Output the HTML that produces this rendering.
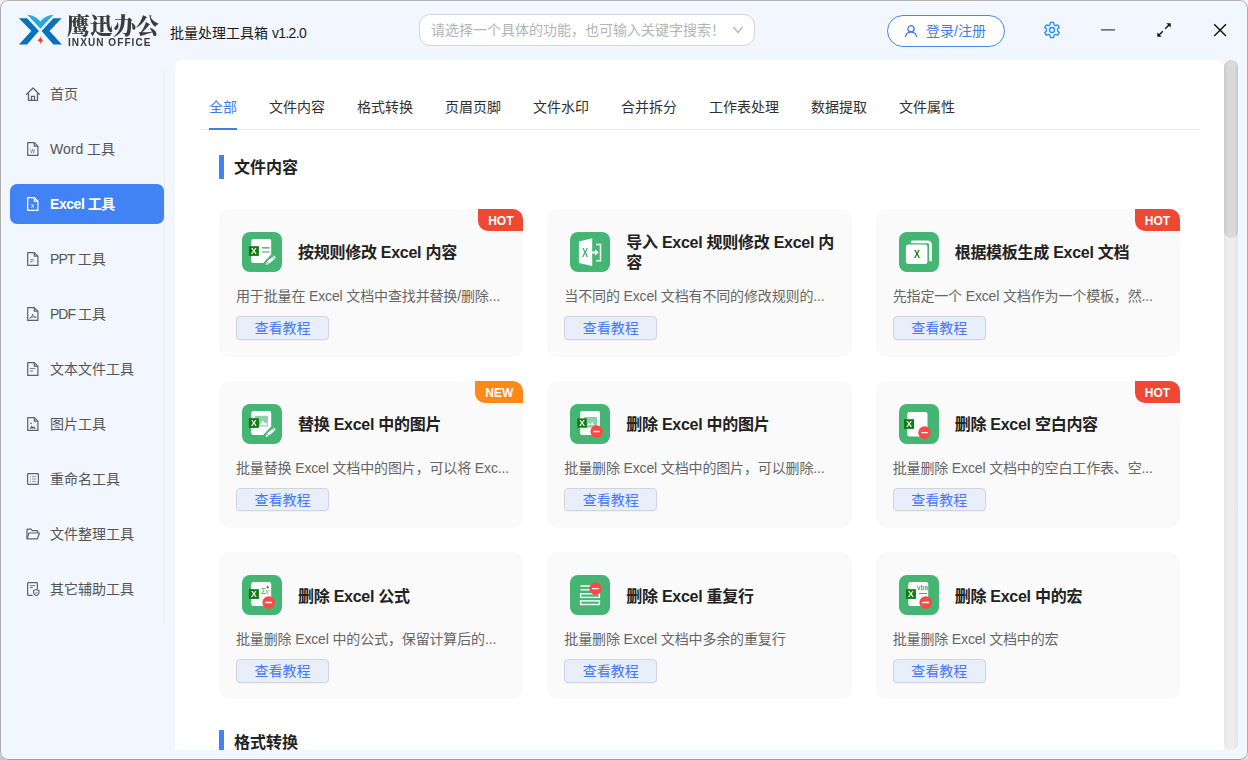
<!DOCTYPE html>
<html lang="zh-CN">
<head>
<meta charset="utf-8">
<title>批量处理工具箱</title>
<style>
*{box-sizing:border-box;margin:0;padding:0}
html,body{width:1248px;height:760px;overflow:hidden;background:#dcdcdc}
body{font-family:"Liberation Sans","Noto Sans CJK SC",sans-serif;color:#333;position:relative}
.win{position:absolute;left:0;top:0;width:1248px;height:760px;background:#f2f6fe;border-radius:8px;overflow:hidden}
.frame{position:absolute;left:0;top:0;width:1248px;height:760px;border:1px solid #adadad;border-color:#b2b2b2 #ababab #9d9d9d #adadad;border-radius:8px;pointer-events:none;z-index:5;box-shadow:inset 0 0 0 1px rgba(255,255,255,.45)}
.cn{position:absolute;width:10px;height:10px}
.abs{position:absolute;z-index:2}
/* header */
.brand-cn{will-change:transform;position:absolute;left:67px;top:11px;font-family:"Noto Serif CJK SC","Noto Sans CJK SC",serif;font-size:23px;font-weight:900;color:#3c3c3c;letter-spacing:0px;line-height:28px;white-space:nowrap}
.brand-en{will-change:transform;position:absolute;left:68px;top:36px;font-size:10px;font-weight:bold;color:#3a3a3a;letter-spacing:1.08px;line-height:14px;white-space:nowrap}
.apptitle{position:absolute;left:170px;top:23px;font-size:14px;line-height:20px;color:#1a1a1a;white-space:nowrap}
.search{position:absolute;left:419px;top:14px;width:336px;height:32px;border:1px solid #d4d4d4;border-radius:11px;background:#fff}
.search span{position:absolute;left:11px;top:5px;font-size:14px;line-height:20px;color:#b4b4b4;white-space:nowrap}
.login{position:absolute;left:887px;top:15px;width:118px;height:32px;border:1px solid #4a84f2;border-radius:16px;background:#fff}
.login span{position:absolute;left:38px;top:5px;font-size:14px;line-height:20px;color:#3f7cf0;white-space:nowrap}
/* sidebar */
.side-line{position:absolute;left:164px;top:70px;width:1px;height:554px;background:#eaebef}
.nav{position:absolute;left:10px;width:154px;height:40px;border-radius:7px}
.nav span{position:absolute;left:40px;top:9px;font-size:14px;line-height:22px;color:#555;white-space:nowrap}
.nav svg{position:absolute;left:16px;top:13px;will-change:transform}
.nav.on{background:#4183f5}
.nav.on span{color:#fff;font-weight:bold;letter-spacing:-.45px}
/* panel */
.panel{position:absolute;left:175px;top:60px;width:1049px;height:690px;background:#fff;border-radius:8px 8px 0 0;overflow:hidden}
.track{position:absolute;left:1224px;top:60px;width:14px;height:690px;background:linear-gradient(90deg,#e4e4e4,#ededed 30%,#ededed 70%,#e2e2e2);border-radius:7px}
.thumb{position:absolute;left:1224px;top:60px;width:14px;height:178px;background:linear-gradient(90deg,#c9c9c9,#d9d9d9 25%,#dadada 75%,#c8c8c8);border-radius:7px}
.tabs{position:absolute;left:24px;top:69px;width:1001px;height:1px;background:#ebebeb}
.tab{position:absolute;top:36px;font-size:14px;line-height:22px;color:#303030;white-space:nowrap}
.tab.on{color:#3f7cf0}
.tabbar{position:absolute;left:34px;top:68px;width:28px;height:2px;background:#3f7cf0}
.sec{position:absolute;left:44px;width:5px;height:24px;background:#4183f5}
.sect{position:absolute;left:59px;font-size:16px;font-weight:bold;line-height:24px;color:#222;white-space:nowrap}
.card{position:absolute;width:304.33px;height:147.33px;background:#fafafa;border-radius:10px;overflow:hidden}
.ico{position:absolute;left:23px;top:23px;width:40px;height:40px;border-radius:8px;background:#45b573}
.ico svg{display:block;will-change:transform}
.ct{position:absolute;left:79px;top:24.5px;width:215px;height:40px;display:flex;align-items:center;font-size:16px;font-weight:bold;line-height:20px;color:#222;letter-spacing:-.27px}
.r1 .ct{top:24px}
.cd{position:absolute;left:17px;top:76px;font-size:14px;line-height:22px;color:#666;white-space:nowrap;letter-spacing:-.14px}
.btn{position:absolute;left:17px;top:107px;width:93px;height:23.5px;border:1px solid #d2d4dc;border-radius:4px;background:#e9eefb;text-align:center;font-size:14px;line-height:22px;color:#4877f3;box-shadow:0 1px 1px rgba(0,0,0,.04)}
.badge{position:absolute;right:0;top:0;width:45px;height:22px;border-radius:0 0 0 10px;color:#fff;font-size:12px;font-weight:bold;line-height:24px;text-align:center}
.hot{background:#f14835}
.new{background:#ff8818;width:48px}
</style>
</head>
<body>
<div class="cn" style="left:0;top:0;background:#f0f0f0"></div><div class="cn" style="right:0;top:0;background:#f3f3f3"></div><div class="cn" style="left:0;bottom:0;background:#c6c6c6"></div><div class="cn" style="right:0;bottom:0;background:#dedede"></div>
<div class="win">
  <!-- header -->
  <svg class="abs" style="left:14px;top:8px" width="56" height="44" viewBox="14 8 56 44">
    <path d="M18.900 18.200H27.100L38.900 31 27.100 44.500H18.900L31.400 31z" fill="#0871be"/>
    <path d="M61.600 18.200H53.400L41.600 31 53.400 44.500H61.900L49.500 31z" fill="#0871be"/>
    <path d="M27 14.700C31.500 14.800 37 17 40.400 21.400 43.800 17 49.300 14.800 53.800 14.700Q52.300 15.800 50.800 17.500L40.400 28.700 30 17.500Q28.500 15.800 27 14.700z" fill="#29a9e0"/>
    <path d="M40.400 36c.4 2.500 1 3.600 3.400 4.200-2.400.6-3 1.700-3.400 4.200-.4-2.500-1-3.600-3.400-4.200 2.400-.6 3-1.700 3.400-4.200z" fill="#f33"/>
  </svg>
  <svg class="abs" style="left:731px;top:24px" width="14" height="12" viewBox="0 0 14 12"><path d="M2.500 2.800L7 8.600 11.500 2.800" fill="none" stroke="#a8a8a8" stroke-width="1.100"/></svg>
  <svg class="abs" style="left:1043px;top:21px" width="18" height="18" viewBox="0 0 18 18"><path d="M10.97 3.76L10.61 1.47L7.39 1.47L7.03 3.76L5.45 4.67L3.28 3.84L1.68 6.62L3.47 8.09L3.47 9.91L1.68 11.38L3.28 14.16L5.45 13.33L7.03 14.24L7.39 16.53L10.61 16.53L10.97 14.24L12.55 13.33L14.72 14.16L16.32 11.38L14.53 9.91L14.53 8.09L16.32 6.62L14.72 3.84L12.55 4.67Z" fill="#e8f3ff" stroke="#2b8af8" stroke-width="1.300" stroke-linejoin="round"/><circle cx="9" cy="9" r="2.500" fill="#f2f6fe" stroke="#2b8af8" stroke-width="1.300"/></svg>
  <svg class="abs" style="left:1100px;top:22px" width="16" height="16" viewBox="0 0 16 16"><path d="M1 7.900h14" stroke="#444" stroke-width="1.400"/></svg>
  <svg class="abs" style="left:1156px;top:22px" width="16" height="16" viewBox="0 0 16 16"><path d="M3 13L6.800 9.200M9.200 6.800L13 3" stroke="#111" stroke-width="1.400"/><path d="M1.300 14.700v-4.300l4.300 4.300zM14.700 1.300v4.300l-4.300-4.300z" fill="#111"/></svg>
  <svg class="abs" style="left:1212px;top:22px" width="16" height="16" viewBox="0 0 16 16"><path d="M2.200 2.200l11.800 11.800M14 2.200L2.200 14" stroke="#111" stroke-width="1.400"/></svg>
  <div class="brand-cn">鹰迅办公</div>
  <div class="brand-en">INXUN OFFICE</div>
  <div class="apptitle">批量处理工具箱 <i style="font-style:normal;letter-spacing:-.65px">v1.2.0</i></div>
  <div class="search"><span>请选择一个具体的功能，也可输入关键字搜索！</span></div>
  <div class="login"><svg class="abs" style="left:16px;top:8px" width="14" height="15" viewBox="0 0 14 15"><circle cx="7" cy="4.800" r="3.100" fill="none" stroke="#3f7cf0" stroke-width="1.300"/><path d="M1.500 12.700c.6-2.700 2.700-4.500 5.500-4.500s4.900 1.800 5.500 4.500" fill="none" stroke="#3f7cf0" stroke-width="1.300" stroke-linecap="round"/></svg><span>登录/注册</span></div>
  <!-- sidebar -->
  <div class="side-line"></div>
  <!-- nav -->
  <div class="nav" style="top:74px"><svg width="14" height="14" viewBox="0 0 14 14"><path d="M.7 7.2L7 1l6.3 6.200" fill="none" stroke="#5c616b" stroke-width="1.3" stroke-linecap="round" stroke-linejoin="round"/><path d="M2.5 6.200v7.100h9V6.200M5.500 13.300V9.300h3v4" fill="none" stroke="#5c616b" stroke-width="1.3" stroke-linejoin="round"/></svg><span>首页</span></div>
  <div class="nav" style="top:129px"><svg width="14" height="14" viewBox="0 0 14 14"><path d="M1.7 .6h6.6l3.6 3.6v9.2H1.7z" fill="none" stroke="#5c616b" stroke-width="1.2" stroke-linejoin="round"/><path d="M8.300 .6v3.600h3.600" fill="none" stroke="#5c616b" stroke-width="1.2" stroke-linejoin="round"/><text x="6.5" y="11.2" font-family="Liberation Sans,sans-serif" font-size="6.5" font-weight="normal" text-anchor="middle" fill="#5c616b">w</text></svg><span>Word 工具</span></div>
  <div class="nav on" style="top:184px"><svg width="14" height="14" viewBox="0 0 14 14"><path d="M1.7 .6h6.6l3.6 3.6v9.2H1.7z" fill="none" stroke="#ffffff" stroke-width="1.2" stroke-linejoin="round"/><path d="M8.300 .6v3.600h3.600" fill="none" stroke="#ffffff" stroke-width="1.2" stroke-linejoin="round"/><text x="6.5" y="11.2" font-family="Liberation Sans,sans-serif" font-size="6.5" font-weight="normal" text-anchor="middle" fill="#ffffff">x</text></svg><span>Excel 工具</span></div>
  <div class="nav" style="top:239px"><svg width="14" height="14" viewBox="0 0 14 14"><path d="M1.7 .6h6.6l3.6 3.6v9.2H1.7z" fill="none" stroke="#5c616b" stroke-width="1.2" stroke-linejoin="round"/><path d="M8.300 .6v3.600h3.600" fill="none" stroke="#5c616b" stroke-width="1.2" stroke-linejoin="round"/><text x="6" y="11.2" font-family="Liberation Sans,sans-serif" font-size="5.5" font-weight="normal" text-anchor="middle" fill="#5c616b">P</text></svg><span><i style="font-style:normal;letter-spacing:-.8px">PPT </i>工具</span></div>
  <div class="nav" style="top:294px"><svg width="14" height="14" viewBox="0 0 14 14"><path d="M1.7 .6h6.6l3.6 3.6v9.2H1.7z" fill="none" stroke="#5c616b" stroke-width="1.2" stroke-linejoin="round"/><path d="M8.300 .6v3.600h3.600" fill="none" stroke="#5c616b" stroke-width="1.2" stroke-linejoin="round"/><path d="M4 11.200c1.200-.6 2.300-2.200 2.600-4.200c.3 2 1.600 3.200 3.400 3.600M4.200 10.600c2-.8 4-1 5.600-.4" fill="none" stroke="#5c616b" stroke-width=".9" stroke-linecap="round"/></svg><span><i style="font-style:normal;letter-spacing:-1px">PDF </i>工具</span></div>
  <div class="nav" style="top:349px"><svg width="14" height="14" viewBox="0 0 14 14"><path d="M1.7 .6h6.6l3.6 3.6v9.2H1.7z" fill="none" stroke="#5c616b" stroke-width="1.2" stroke-linejoin="round"/><path d="M8.300 .6v3.600h3.600" fill="none" stroke="#5c616b" stroke-width="1.2" stroke-linejoin="round"/><path d="M3.800 6.600h5.400M3.800 9h3" fill="none" stroke="#5c616b" stroke-width="1" opacity=".85"/></svg><span>文本文件工具</span></div>
  <div class="nav" style="top:404px"><svg width="14" height="14" viewBox="0 0 14 14"><path d="M1.7 .6h6.6l3.6 3.6v9.2H1.7z" fill="none" stroke="#5c616b" stroke-width="1.2" stroke-linejoin="round"/><path d="M8.300 .6v3.600h3.600" fill="none" stroke="#5c616b" stroke-width="1.2" stroke-linejoin="round"/><path d="M3.500 11.400l2.200-3 1.500 1.800 1-1 1.600 2.200z" fill="#5c616b"/><circle cx="5" cy="6.400" r=".8" fill="#5c616b"/></svg><span>图片工具</span></div>
  <div class="nav" style="top:459px"><svg width="14" height="14" viewBox="0 0 14 14"><rect x="1.600" y="1.600" width="10.800" height="10.800" rx=".8" fill="none" stroke="#5c616b" stroke-width="1.200"/><path d="M4 4.600h1M6 4.600h4.200M4 7h1M6 7h4.200M4 9.400h1M6 9.400h4.200" fill="none" stroke="#5c616b" stroke-width=".8" opacity=".8"/></svg><span>重命名工具</span></div>
  <div class="nav" style="top:514px"><svg width="14" height="14" viewBox="0 0 14 14"><path d="M1 11.800V2.800c0-.4.300-.7.700-.7h3.300l1.300 1.500h4.700c.4 0 .7.300.7.700v1.500" fill="none" stroke="#5c616b" stroke-width="1.200" stroke-linejoin="round"/><path d="M1 11.800l2-5.800h10.400l-2 5.800z" fill="none" stroke="#5c616b" stroke-width="1.200" stroke-linejoin="round"/></svg><span>文件整理工具</span></div>
  <div class="nav" style="top:569px"><svg width="14" height="14" viewBox="0 0 14 14"><path d="M6.500 13.300H2.300c-.4 0-.7-.3-.7-.7V1.400c0-.4.300-.7.700-.7h8.400c.4 0 .7.300.7.700v5.500" fill="none" stroke="#5c616b" stroke-width="1.200" stroke-linejoin="round"/><path d="M3.800 3.700h5.400M3.800 5.700h3" fill="none" stroke="#5c616b" stroke-width=".9"/><path d="M10.300 7.600l2.700 1v2c0 1.500-1.100 2.500-2.700 3.100c-1.600-.6-2.700-1.600-2.700-3.100v-2z" fill="#f2f6fe" stroke="#5c616b" stroke-width="1.100" stroke-linejoin="round"/><path d="M9.100 10.600l.9.900 1.600-1.700" fill="none" stroke="#5c616b" stroke-width=".9"/></svg><span>其它辅助工具</span></div>
  <!-- panel -->
  <div class="track"></div><div class="thumb"></div>
  <div class="panel" id="panel">
    <div class="tabs"></div>
    <div class="tabbar"></div>
    <div class="tab on" style="left:34px">全部</div>
    <div class="tab" style="left:94px">文件内容</div>
    <div class="tab" style="left:182px">格式转换</div>
    <div class="tab" style="left:270px">页眉页脚</div>
    <div class="tab" style="left:358px">文件水印</div>
    <div class="tab" style="left:446px">合并拆分</div>
    <div class="tab" style="left:534px">工作表处理</div>
    <div class="tab" style="left:636px">数据提取</div>
    <div class="tab" style="left:724px">文件属性</div>
    <div class="sec" style="top:95px"></div><div class="sect" style="top:96px">文件内容</div>
    <div class="card r1" style="left:44px;top:149.33px"><div class="ico"><svg width="40" height="40" viewBox="0 0 40 40"><path d="M11.300 6.900h15.900a2 2 0 0 1 2 2v13.600L21.200 31h-9.900a2 2 0 0 1-2-2V8.900a2 2 0 0 1 2-2z" fill="#fff"/><path d="M20 15.800h7.700M20 20h7.700" stroke="#3aa55e" stroke-width="1.200" fill="none"/><rect x="6.9" y="14.2" width="10" height="9.7" fill="#107c10"/><text x="11.9" y="22.3" font-family="Liberation Sans,sans-serif" font-size="8.500" font-weight="bold" fill="#fff" text-anchor="middle">X</text><g transform="rotate(-41 28.200 28.700)"><path d="M22.200 28.700l2.400-1.500v3z" fill="#fff"/><rect x="25.200" y="27.200" width="7" height="3" fill="#fff"/><rect x="32.800" y="27.200" width="1.600" height="3" rx=".4" fill="#fff"/></g></svg></div><div class="ct">按规则修改 Excel 内容</div><div class="cd">用于批量在 Excel 文档中查找并替换/删除...</div><div class="btn">查看教程</div><div class="badge hot">HOT</div></div>
    <div class="card r1" style="left:372.33px;top:149.33px"><div class="ico"><svg width="40" height="40" viewBox="0 0 40 40"><path d="M8.900 9.500L22.200 6.200V34.100L8.900 31z" fill="#fff"/><text transform="translate(15.1 24.800) scale(.72 1)" font-family="Liberation Sans,sans-serif" font-size="13" font-weight="bold" fill="#45b573" text-anchor="middle">X</text><path d="M22.200 20.500h4" stroke="#fff" stroke-width="2.100" fill="none"/><path d="M25.200 17.300l3.400 3.200-3.400 3.200z" fill="#fff"/><path d="M26.200 12.400h4.300v16.400h-4.300" stroke="#fff" stroke-width="1.500" fill="none"/></svg></div><div class="ct">导入 Excel 规则修改 Excel 内容</div><div class="cd">当不同的 Excel 文档有不同的修改规则的...</div><div class="btn">查看教程</div></div>
    <div class="card r1" style="left:700.67px;top:149.33px"><div class="ico"><svg width="40" height="40" viewBox="0 0 40 40"><path d="M13.200 9.800h15.400a3 3 0 0 1 3 3v15.200" stroke="#fff" stroke-width="2.800" stroke-linecap="round" fill="none"/><rect x="6.900" y="12.500" width="21.500" height="19.600" rx="2.800" fill="#fff"/><text transform="translate(18 26.200) scale(.86 1)" font-family="Liberation Sans,sans-serif" font-size="10.500" font-weight="bold" fill="#107c10" text-anchor="middle">X</text></svg></div><div class="ct">根据模板生成 Excel 文档</div><div class="cd">先指定一个 Excel 文档作为一个模板，然...</div><div class="btn">查看教程</div><div class="badge hot">HOT</div></div>
    <div class="card" style="left:44px;top:320.67px"><div class="ico"><svg width="40" height="40" viewBox="0 0 40 40"><path d="M11.300 6.900h15.900a2 2 0 0 1 2 2v13.600L21.200 31h-9.900a2 2 0 0 1-2-2V8.900a2 2 0 0 1 2-2z" fill="#fff"/><rect x="12.900" y="11.800" width="13" height="10.700" fill="#8ad3aa"/><path d="M17.500 21.200l3.300-4.600 2 2.600 1-1 1.900 3z" fill="#fff"/><rect x="6.9" y="14.2" width="10" height="9.7" fill="#107c10"/><text x="11.9" y="22.3" font-family="Liberation Sans,sans-serif" font-size="8.500" font-weight="bold" fill="#fff" text-anchor="middle">X</text><g transform="rotate(-41 28.200 28.700)"><path d="M22.200 28.700l2.400-1.500v3z" fill="#fff"/><rect x="25.200" y="27.200" width="7" height="3" fill="#fff"/><rect x="32.800" y="27.200" width="1.600" height="3" rx=".4" fill="#fff"/></g></svg></div><div class="ct">替换 Excel 中的图片</div><div class="cd">批量替换 Excel 文档中的图片，可以将 Exc...</div><div class="btn">查看教程</div><div class="badge new">NEW</div></div>
    <div class="card" style="left:372.33px;top:320.67px"><div class="ico"><svg width="40" height="40" viewBox="0 0 40 40"><rect x="10.1" y="7.1" width="19.9" height="23.9" rx="2.200" fill="#fff"/><rect x="14" y="13" width="13" height="10.700" fill="#8ad3aa"/><path d="M17.500 21l1.200-2.300 1.800 2 1.700-3.200 1.600 3.500z" fill="#fff"/><rect x="7.2" y="14.4" width="9.6" height="9.299999999999999" fill="#107c10"/><text x="12.0" y="22.1" font-family="Liberation Sans,sans-serif" font-size="8.500" font-weight="bold" fill="#fff" text-anchor="middle">X</text><circle cx="26.7" cy="27.5" r="6.300" fill="#ff4848"/><rect x="23.2" y="26.85" width="6.800" height="1.300" rx=".5" fill="#fff"/></svg></div><div class="ct">删除 Excel 中的图片</div><div class="cd">批量删除 Excel 文档中的图片，可以删除...</div><div class="btn">查看教程</div></div>
    <div class="card" style="left:700.67px;top:320.67px"><div class="ico"><svg width="40" height="40" viewBox="0 0 40 40"><rect x="8.3" y="8.1" width="20.2" height="24.3" rx="2.200" fill="#fff"/><rect x="5" y="15.2" width="10" height="9.7" fill="#107c10"/><text x="10.0" y="23.3" font-family="Liberation Sans,sans-serif" font-size="8.500" font-weight="bold" fill="#fff" text-anchor="middle">X</text><circle cx="25.5" cy="28.6" r="6.300" fill="#ff4848"/><rect x="22.0" y="27.95" width="6.800" height="1.300" rx=".5" fill="#fff"/></svg></div><div class="ct">删除 Excel 空白内容</div><div class="cd">批量删除 Excel 文档中的空白工作表、空...</div><div class="btn">查看教程</div><div class="badge hot">HOT</div></div>
    <div class="card" style="left:44px;top:492px"><div class="ico"><svg width="40" height="40" viewBox="0 0 40 40"><rect x="9.3" y="6.9" width="19.9" height="24.1" rx="2.200" fill="#fff"/><text x="19" y="18.700" font-family="Liberation Sans,sans-serif" font-size="8.500" fill="#45b573">Σ</text><text x="23.500" y="18.700" font-family="Liberation Sans,sans-serif" font-size="7" font-style="italic" fill="#45b573">x</text><path d="M25.700 10.800v2.800M24.300 12.200h2.800" stroke="#107c10" stroke-width=".8"/><rect x="6.9" y="14.2" width="10" height="9.7" fill="#107c10"/><text x="11.9" y="22.3" font-family="Liberation Sans,sans-serif" font-size="8.500" font-weight="bold" fill="#fff" text-anchor="middle">X</text><circle cx="26.7" cy="27.5" r="6.300" fill="#ff4848"/><rect x="23.2" y="26.85" width="6.800" height="1.300" rx=".5" fill="#fff"/></svg></div><div class="ct">删除 Excel 公式</div><div class="cd">批量删除 Excel 中的公式，保留计算后的...</div><div class="btn">查看教程</div></div>
    <div class="card" style="left:372.33px;top:492px"><div class="ico"><svg width="40" height="40" viewBox="0 0 40 40"><path d="M10.500 11h19M10.500 14.800h19" stroke="#fff" stroke-width="1.500" fill="none"/><rect x="10.600" y="18.800" width="18.800" height="3.600" stroke="#fff" stroke-width="1.400" fill="none"/><rect x="10.600" y="25.900" width="18.800" height="3.600" stroke="#fff" stroke-width="1.400" fill="none"/><circle cx="25.5" cy="13.6" r="6.300" fill="#ff4848"/><rect x="22.0" y="12.95" width="6.800" height="1.300" rx=".5" fill="#fff"/></svg></div><div class="ct">删除 Excel 重复行</div><div class="cd">批量删除 Excel 文档中多余的重复行</div><div class="btn">查看教程</div></div>
    <div class="card" style="left:700.67px;top:492px"><div class="ico"><svg width="40" height="40" viewBox="0 0 40 40"><rect x="9.3" y="6.9" width="19.9" height="24.1" rx="2.200" fill="#fff"/><text x="18" y="14.600" font-family="Liberation Sans,sans-serif" font-size="6.500" font-weight="bold" fill="#45b573">vba</text><path d="M20 18.500h8" stroke="#45b573" stroke-width="1.100"/><rect x="6.9" y="14.2" width="10" height="9.7" fill="#107c10"/><text x="11.9" y="22.3" font-family="Liberation Sans,sans-serif" font-size="8.500" font-weight="bold" fill="#fff" text-anchor="middle">X</text><circle cx="26.7" cy="27.5" r="6.300" fill="#ff4848"/><rect x="23.2" y="26.85" width="6.800" height="1.300" rx=".5" fill="#fff"/></svg></div><div class="ct">删除 Excel 中的宏</div><div class="cd">批量删除 Excel 文档中的宏</div><div class="btn">查看教程</div></div>
    <div class="sec" style="top:670px"></div><div class="sect" style="top:671px">格式转换</div>
  </div>
  <div class="frame"></div>
</div>
</body>
</html>
